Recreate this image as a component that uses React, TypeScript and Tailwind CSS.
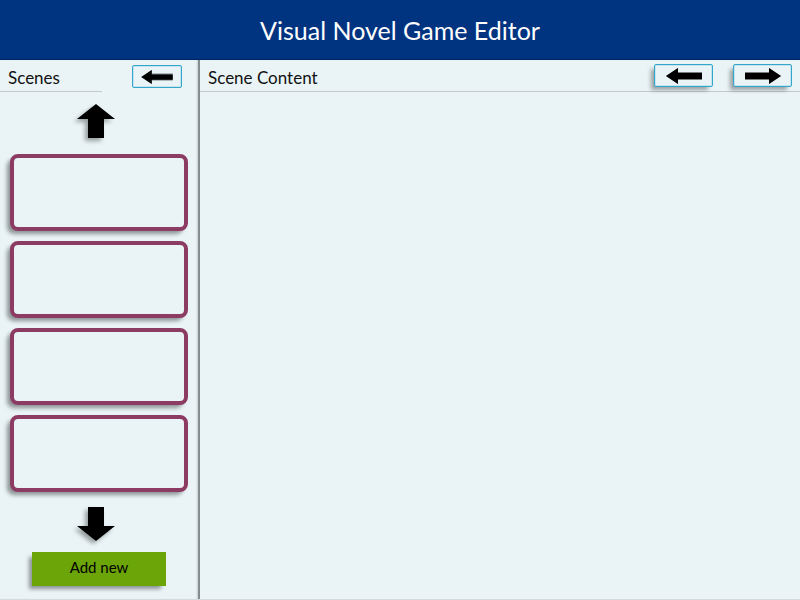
import React from "react";

const scenes = [1, 2, 3, 4];

function SideArrow({ className = "" }: { className?: string }) {
  return (
    <svg viewBox="0 0 36 16" className={className} aria-hidden="true">
      <path d="M0 8 12 0v4h24v8H12v4Z" fill="#777c7d" />
      <path d="M0 8 12 0v5h24v6H12v5Z" fill="#000" />
    </svg>
  );
}

function BlockArrow({ className = "" }: { className?: string }) {
  return (
    <svg viewBox="0 0 38 34" className="h-[34px] w-[38px] overflow-visible drop-shadow-[-3px_3px_2px_rgba(0,0,0,0.35)]" aria-hidden="true">
      <path className={className} d="M19 0 38 15H27V34H11V15H0Z" fill="#000" />
    </svg>
  );
}

export default function App() {
  return (
    <div className="flex min-h-screen flex-col border-b border-[#d5dadb] bg-[#eaf4f6] font-['Lato',sans-serif] text-[#111]">
      <header className="flex h-[60px] items-center justify-center border-b border-[#002660] bg-[#003380]">
        <h1 className="text-[25px] leading-8 text-white">Visual Novel Game Editor</h1>
      </header>
      <div className="flex flex-1">
        <aside className="flex w-[200px] shrink-0 flex-col border-r-2 border-[#858d8e] shadow-[inset_-2px_0_2px_-1px_rgba(0,0,0,0.15)]">
          <div className="flex h-8 items-start justify-between pr-4">
            <h2 className="h-8 w-[102px] border-b border-[#c3c9ca] pt-1.5 pl-2 text-[17px] leading-6">Scenes</h2>
            <button type="button" aria-label="Previous scene" className="mt-[5px] flex h-[23px] w-[50px] items-center justify-center rounded-xs border border-[#35a6cb] shadow-[inset_0_0_0_1px_#c4e5ef]">
              <SideArrow className="h-3.5 w-8" />
            </button>
          </div>
          <nav aria-label="Scenes" className="flex flex-col items-center pt-3">
            <button type="button" aria-label="Scroll up" className="pr-1.5">
              <BlockArrow />
            </button>
            <ul className="flex w-full flex-col gap-2.5 px-2.5 pt-4 pb-[15px]">
              {scenes.map((n) => (
                <li key={n} className="flex">
                  <button
                    type="button"
                    aria-label={`Scene ${n}`}
                    className="h-[77px] w-full rounded-lg border-4 border-[#8c3b63] bg-[#eaf4f6] shadow-[-4px_4px_4px_-1px_rgba(0,0,0,0.4)]"
                  />
                </li>
              ))}
            </ul>
            <button type="button" aria-label="Scroll down" className="pr-1.5">
              <BlockArrow className="origin-center rotate-180 [transform-box:fill-box]" />
            </button>
            <button type="button" className="mt-[11px] h-[34px] w-[134px] bg-[#6ca508] pb-1 text-[15px] text-black shadow-[-4px_4px_4px_-1px_rgba(0,0,0,0.4)]">
              Add new
            </button>
          </nav>
        </aside>
        <main className="flex min-w-0 flex-1 flex-col">
          <div className="flex h-8 items-start justify-between border-b border-[#c3c9ca] pr-2 pl-2">
            <h2 className="pt-1.5 text-[17px] leading-6">Scene Content</h2>
            <div className="flex gap-5 pt-1">
              <button type="button" aria-label="Back" className="flex h-[23px] w-[59px] items-center justify-center rounded-xs border border-[#35a6cb] bg-[#eaf4f6] shadow-[inset_0_0_0_1px_#c4e5ef,-4px_4px_4px_-1px_rgba(0,0,0,0.35)]">
                <SideArrow className="h-4 w-9" />
              </button>
              <button type="button" aria-label="Forward" className="flex h-[23px] w-[59px] items-center justify-center rounded-xs border border-[#35a6cb] bg-[#eaf4f6] shadow-[inset_0_0_0_1px_#c4e5ef,-4px_4px_4px_-1px_rgba(0,0,0,0.35)]">
                <SideArrow className="h-4 w-9 rotate-180" />
              </button>
            </div>
          </div>
        </main>
      </div>
    </div>
  );
}
